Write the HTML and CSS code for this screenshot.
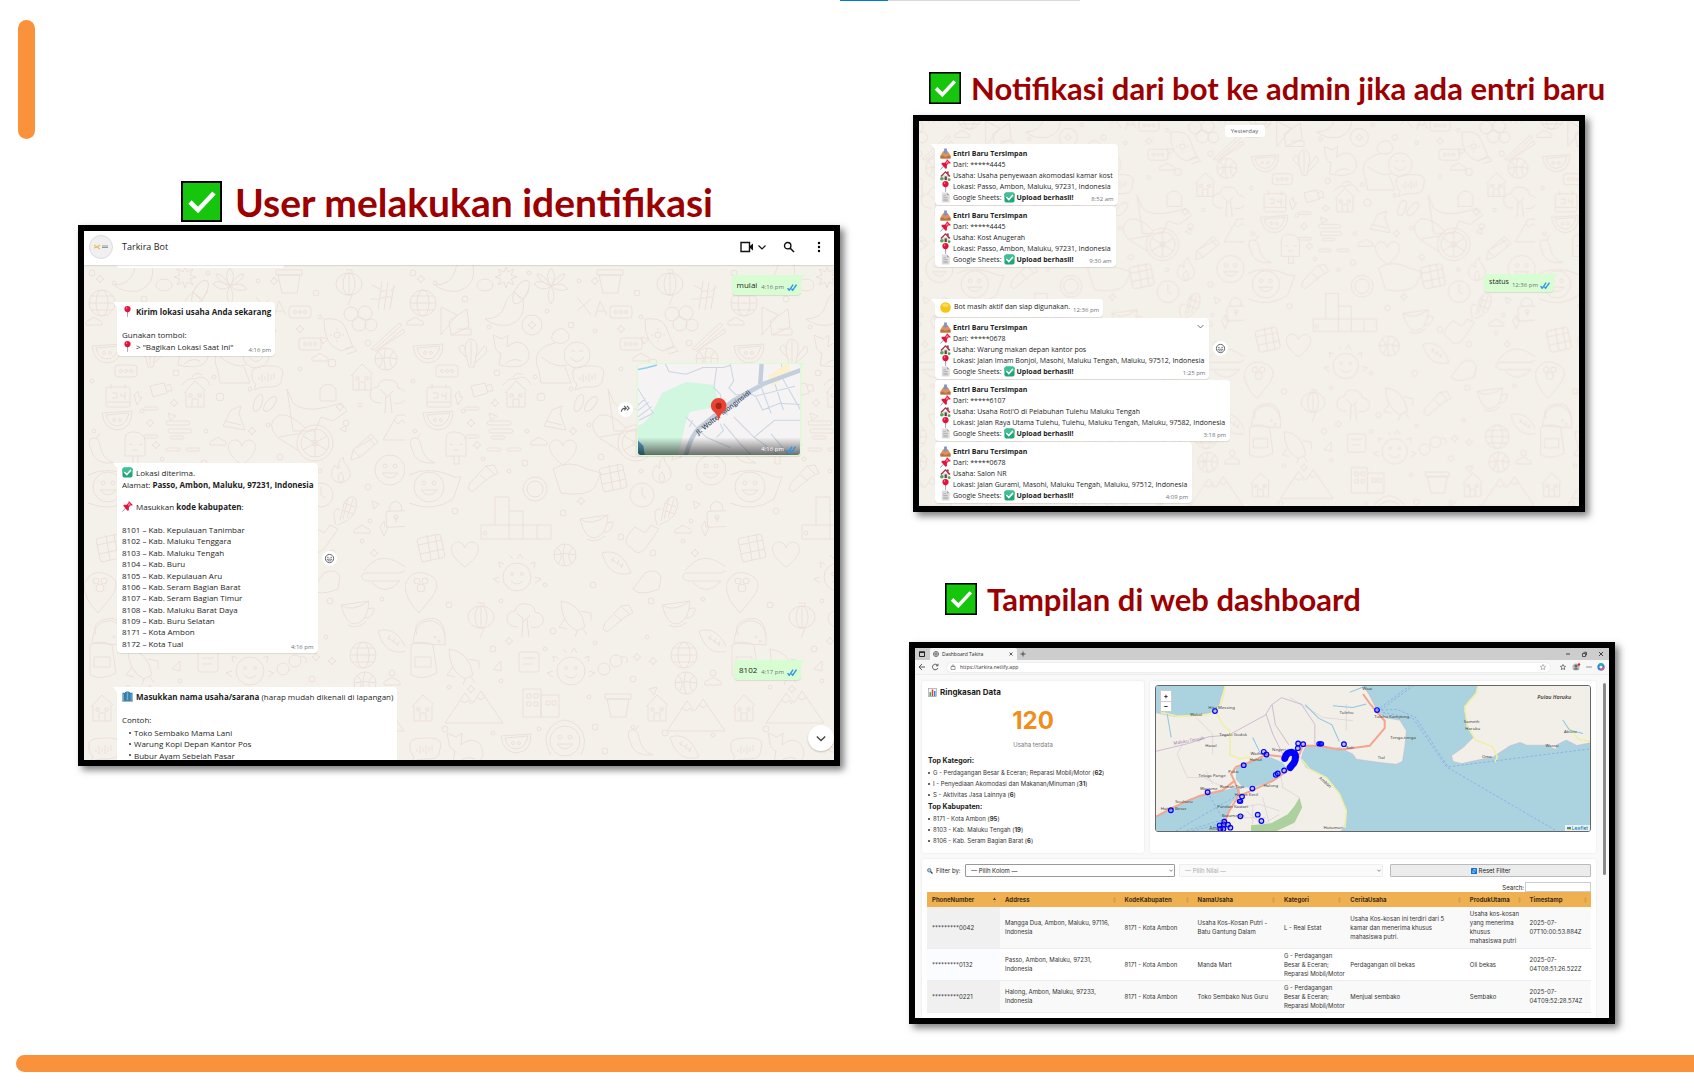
FILE: index.html
```html
<!DOCTYPE html>
<html lang="id">
<head>
<meta charset="utf-8">
<meta name="viewport" content="width=device-width, initial-scale=1">
<title>Tarkira Bot</title>
<link rel="stylesheet" href="styles.css">
</head>
<body>
<svg class="defs" aria-hidden="true">
  <defs>
    <symbol id="tick" viewBox="0 0 41 41"><rect x="1" y="1" width="39" height="39" fill="#16c60c" stroke="#000" stroke-width="2"/><path d="M9 21l8 8L33 12" fill="none" stroke="#fff" stroke-width="4.6"/></symbol>
    <symbol id="e-check" viewBox="0 0 24 24"><rect x="1" y="1" width="22" height="22" rx="4" fill="#21a67a"/><rect x="1" y="1" width="22" height="11" rx="4" fill="#3fbf95"/><path d="M6 12l4.5 4.5L18.500 7.500" fill="none" stroke="#fff" stroke-width="3.400" stroke-linecap="round"/></symbol>
    <symbol id="e-pin" viewBox="0 0 24 24"><path d="M11 10h2.600l-.6 14h-1.400z" fill="#8d93a8"/><circle cx="12" cy="6.800" r="6.800" fill="#e0143c"/><circle cx="10" cy="4.500" r="1.800" fill="#ff7f95"/></symbol>
    <symbol id="e-push" viewBox="0 0 24 24"><path d="M10 13L1 23" stroke="#8d93a8" stroke-width="2"/><path d="M15 0l9 9-4 1-2 0-3 4 0 6-3 1L3 11l1-3 6 0 4-4z" fill="#e0143c"/><path d="M12 8l4-4 3 3-4 4z" fill="#ff6f8a"/></symbol>
    <symbol id="e-tray" viewBox="0 0 24 24"><path d="M6 8h12l5 9v6H1v-6z" fill="#d9935b"/><path d="M1 17h6l2 2h6l2-2h6v6H1z" fill="#b8713f"/><path d="M9 1h6v6h3l-6 6-6-6h3z" fill="#7d92c4"/></symbol>
    <symbol id="e-house" viewBox="0 0 24 24"><path d="M4 11h15v11H4z" fill="#e9e2d6"/><path d="M12 2L1 13l2 2 9-9 8 9 3-2z" fill="#a03347"/><path d="M15 3h4v6l-4-4z" fill="#a03347"/><rect x="10" y="14" width="5" height="8" fill="#5b4a4a"/><circle cx="4" cy="19" r="4" fill="#58a454"/><circle cx="20" cy="21" r="3" fill="#58a454"/></symbol>
    <symbol id="e-page" viewBox="0 0 24 24"><path d="M4 1h11l6 6v16H4z" fill="#dcdcdc"/><path d="M15 1l6 6h-6z" fill="#a9a9a9"/><path d="M7 8h6M7 12h10M7 16h10M7 19h10" stroke="#a2a2a2" stroke-width="1.500"/></symbol>
    <symbol id="e-build" viewBox="0 0 24 24"><path d="M1 4h6v19H1zM9 1h6v22H9zM17 4h6v19h-6z" fill="#2a7fb5"/><path d="M7 2h2v21H7zM15 2h2v21h-2z" fill="#245a80"/><path d="M3 6v14M12 3v17M20 6v14" stroke="#8dc8e8" stroke-width="1.500"/><path d="M0 20h5v3H0zM19 20h5v3h-5z" fill="#b9a16a"/></symbol>
    <symbol id="e-yellow" viewBox="0 0 24 24"><circle cx="12" cy="12" r="11.500" fill="#f5c518"/><ellipse cx="12" cy="7" rx="7" ry="4" fill="#fbdc5a"/></symbol>
    <symbol id="e-chart" viewBox="0 0 24 24"><rect x="1" y="1" width="22" height="22" fill="#f4f4f4" stroke="#8a9297" stroke-width="1.500"/><rect x="4" y="11" width="4" height="11" fill="#3fa66a"/><rect x="10" y="4" width="4" height="18" fill="#d9442f"/><rect x="16" y="8" width="4" height="14" fill="#3587d6"/></symbol>
    <symbol id="e-mag" viewBox="0 0 24 24"><circle cx="9" cy="9" r="7" fill="#9fd3f2" stroke="#5a6a78" stroke-width="3"/><path d="M14 14l8 8" stroke="#33475b" stroke-width="5"/></symbol>
    <symbol id="e-reset" viewBox="0 0 24 24"><rect width="24" height="24" rx="2" fill="#0f75d3"/><path d="M7 10a5.500 5.500 0 0 1 10-1M17 14a5.500 5.500 0 0 1-10 1M17 5v4h-4M7 19v-4h4" fill="none" stroke="#fff" stroke-width="2"/></symbol>
    <symbol id="i-smile" viewBox="0 0 24 24"><circle cx="12" cy="12" r="9" fill="none" stroke="#54595c" stroke-width="2"/><circle cx="8.500" cy="9.500" r="1.500" fill="#54595c"/><circle cx="15.500" cy="9.500" r="1.500" fill="#54595c"/><path d="M7 13.500h10c-.5 5-9.500 5-10 0z" fill="none" stroke="#54595c" stroke-width="1.600"/></symbol>
    <symbol id="i-read" viewBox="0 0 18 12"><path d="M1 7l3 4 7-10M8 8l2 3 7-10" fill="none" stroke="#2f95e6" stroke-width="2.500"/></symbol>
    <symbol id="i-down" viewBox="0 0 12 8"><path d="M1 1.500l5 5 5-5" fill="none" stroke="currentColor" stroke-width="1.600"/></symbol>
    <symbol id="i-sort" viewBox="0 0 6 12"><path d="M3 0l3 5H0zM3 12l3-5H0z" fill="#cf9a4a"/></symbol>
    <symbol id="i-up" viewBox="0 0 6 12"><path d="M3 1l3 5H0z" fill="#4a3a20"/><path d="M3 11l2-3H1z" fill="#cf9a4a"/></symbol>

    <g id="d-globe"><circle r="13"/><ellipse rx="6" ry="13"/><path d="M-13 0H13M-11-7H11M-11 7H11"/></g>
    <g id="d-smile"><circle r="15"/><circle cx="-5" cy="-4" r="2"/><circle cx="5" cy="-4" r="2"/><path d="M-8 3Q0 13 8 3z"/></g>
    <g id="d-flower"><path d="M0 0Q-7-10 0-18Q7-10 0 0Q12-5 17 3Q8 7 0 0Q6 12 0 18Q-6 10 0 0Q-12-8-17-2Q-9 7 0 0Q8-13 14-12Q12-4 0 0Q-8-13-14-12Q-12-4 0 0"/></g>
    <g id="d-star"><path d="M0-9l2 5 6-3-3 6 6 2-6 2 3 6-6-3-2 6-2-6-6 3 3-6-6-2 6-2-3-6 6 3z"/></g>
    <g id="d-spark"><path d="M0-4Q1-1 4 0Q1 1 0 4Q-1 1-4 0Q-1-1 0-4z"/></g>
    <g id="d-heart"><path d="M0 12C-20-2-14-14-6-13Q-1-12 0-7Q2-13 7-13C16-12 17 0 0 12z"/></g>
    <g id="d-house"><path d="M-11-2L0-14 11-4M-9-3v15H9V-4M-3 12V4h6v8M-6-1h3v3h-3zM3-1h3v3H3z"/></g>
    <g id="d-box"><rect x="-11" y="-6" width="22" height="12" rx="3"/><circle cx="-5" r="1.500"/><circle r="1.500"/><circle cx="5" r="1.500"/></g>
    <g id="d-cal"><rect x="-12" y="-9" width="24" height="20" rx="2"/><path d="M-12 6H12M-7-12v5M7-12v5M-6-3h5v5h-5M3-3v3h4M7-4v8"/></g>
    <g id="d-fire"><path d="M0 12C-14 10-9-2-6-6Q-4-2-2-3Q-4-9 2-14Q2-8 7-4Q14 8 0 12zM0 12Q-6 6 0 1Q5 7 0 12"/></g>
    <g id="d-pencil"><path d="M-14 12l2-10L6-14l7 8L-5 9zM-12 2l7 7M3-11l7 8M-9 0L8-10"/></g>
    <g id="d-tree"><path d="M-7 6Q-18 6-18-3Q-17-10-10-10Q-8-19 2-17Q10-16 10-9Q20-7 18 1Q15 8 6 6M-3 16L-2-2l-6-6M-2 1l7-7M4 16L2-2"/></g>
    <g id="d-melon"><path d="M-16-7L14-9Q14 9-1 10Q-14 9-16-7M-12-5l23-2Q8 6-1 6Q-10 5-12-5"/><circle cx="-4" r="1.500"/><circle cx="2" r="1.500"/></g>
    <g id="d-ice"><path d="M-10 10V-8Q-9-15 0-14Q10-13 10-4V10zM-2 10v8h5v-8M-6-2l3 1M4-1l3-1M-3 4h6"/></g>
    <g id="d-wheel"><circle r="18"/><circle r="14"/><circle r="3"/><path d="M0-14V14M-12-7L12 7M-12 7L12-7M-10-15Q-24-30-36-28Q-50-20-38-6L-16 8M-36-6l24-4"/></g>
    <g id="d-berry"><circle cx="-8" cy="-6" r="7"/><circle cx="6" cy="-7" r="7"/><circle cy="4" r="7"/><circle cx="12" cy="5" r="6"/></g>
    <g id="d-ball"><circle r="11"/><path d="M-11 0Q0-3 11 0M0-11Q-4 0 0 11M-8-8Q0 0-7 9M8-8Q0 0 7 9"/></g>
    <g id="d-fox"><path d="M-18-16l2 10Q-16 0-10 2L-12 14Q14 20 18 6Q18-8 6-9Q0-8-4-4L-3-16l-6 4zM-6 13Q2 6 10 10"/></g>
    <g id="d-hug"><path d="M-4-24Q6-34 12-22Q12-12 0-14Q-8-16-4-24M-2-14Q-28-8-18 14L-16 26H14L8 10M-16 0Q0 12 10 8"/><circle cx="20" cy="-2" r="13"/><path d="M13 0Q20 9 27 0M14-6l4 0M22-6l4 0"/></g>
    <g id="d-chat"><path d="M-15-6Q-14-11 0-11Q15-12 16-5L14 5Q12 11-2 10Q-7 10-13 13L-11 7Q-16 5-15-6M-8 0v3M-5-3v8M-2-1v4M1-4v9M4-2v5M7-4v6"/></g>
    <g id="d-cactus"><path d="M-4 14L-8-2Q-8-14-2-14Q5-13 4-2L1 14zM-7 4L-14-3Q-14-8-10-8L-7-3M3 4L11-7Q15-6 13 0L2 10M-2-12V12"/></g>
    <g id="d-kite"><path d="M-13-16Q4-18 8-8L16 12 4 16Q-14 10-13-16zM8 14l8-3 4 5-10 3"/><circle r="3"/><path d="M0-7v2M0 7V5M-7 0h2M7 0H5"/></g>
    <g id="d-cards"><path d="M-14-16L2-8-14 12zM-6-2L12-14 14 4-4 12zM-4 12h20v-6H2"/></g>
    <g id="d-cup"><path d="M-15-8L13-12Q12 8 0 11Q-10 12-15-8M12-4Q22-8 16 2Q13 6 8 5M-15-8Q-4 0 13-12M-8 12Q0 17 10 9"/></g>
    <g id="d-lock"><rect x="-10" y="-4" width="20" height="16" rx="3"/><path d="M-6-4v-5Q0-18 6-9v5M0 2v5"/><circle cy="2" r="2"/></g>
    <g id="d-corn"><path d="M-10 14Q-16-4-6-2M-8 14Q14 6 10-12Q4-18-2-8L-6 10M-2-8L9-4M-4-1L8 3M2-13L-3 8M7-12L1 7"/></g>
    <g id="d-grid"><rect x="-12" y="-12" width="24" height="24" rx="3" transform="rotate(-12)"/><path d="M-4-13L0 12M4-14L8 10M-13-3L11-8M-11 6L13 1"/></g>
    <g id="d-taco"><path d="M-16 10Q-14-14 4-12Q18-8 16 12zM-12 2Q-18-10-2-14Q14-18 16 2"/><circle cx="6" cy="4" r="1"/><circle cx="10" cy="8" r="1"/></g>
    <g id="d-foot"><path d="M-15-10Q4-16 14 10Q-8 16-15-10M-6-4l12 8M-3-6l-2 5M2-3l-2 5M6 0l-2 5"/></g>
    <g id="d-rocket"><path d="M-14-16Q6-14 10 10L2 14Q-14 6-14-16M-10 2l-6 8 8 2M6-6l10 2 0 8M2 14l-2 6M8 12l4 6"/></g>
    <g id="d-sun"><circle r="14"/><path d="M0-18l3-5 3 5M13-13l5-2-1 6M18 0l6 2-6 4M-13-13l-5-2 1 6M-18 0l-6 2 6 4M-4-18l-4-4M-6 4Q0 10 6 4"/><circle cx="-5" cy="-3" r="1.500"/><circle cx="5" cy="-3" r="1.500"/></g>
    <g id="d-mount"><path d="M-30 18L-10-12-2-2 6-14 28 18zM-15-5l5 3 3-3 3 4M2-8l4 3 4-3"/></g>
    <g id="d-lamp"><ellipse rx="13" ry="11"/><ellipse rx="6" ry="11"/><path d="M0-11V11M-3-14h6v3M-3 11h6l-4 10"/></g>
    <g id="d-bamboo"><path d="M-6 14L-2-14M0 15L4-13M6 14l4-24M-5 3h6M1 2h6M-12-10l8 4M12-8l-6 4M-14 4l8 0M-3-4h6"/></g>
    <g id="d-whale"><path d="M-20 10Q-4 10 0-4Q2-14 10-16L18-10Q22 10 4 16Q-10 18-20 10M18-10l6-8M16-10l-8-8"/></g>
    <g id="d-sticks"><path d="M-16 14L12-12l3 2-28 25zM-12 17L16-6l2 3-28 18z"/></g>
    <g id="d-pot"><path d="M-12-6h22l-3 18H-8zM-14-11h26v5h-26z"/></g>
    <g id="d-pepper"><path d="M-10-12Q-2-16 0-6Q2 8 14 12Q-6 14-9-2Q-12-6-10-12M-4-12l4-6"/></g>
    <g id="d-bottle"><path d="M-14 12l4 3L8 0l8-4-4-8-8 1-16 17zM-2-2l7 6M4-11l8 8"/></g>

    <pattern id="doodles" width="321" height="500" patternUnits="userSpaceOnUse">
      <g fill="none" stroke="#ecdfd9" stroke-width="1">
        <use href="#d-whale" x="50" y="10"/><use href="#d-star" x="101" y="11"/><use href="#d-flower" x="146" y="21"/><use href="#d-pot" x="206" y="16"/><use href="#d-lamp" x="265" y="19"/><use href="#d-bamboo" x="300" y="30"/><use href="#d-globe" x="18" y="38"/><ellipse cx="80" cy="20" rx="8" ry="6"/><ellipse cx="116" cy="27" rx="6" ry="13" transform="rotate(30 116 27)"/>
        <use href="#d-box" x="216" y="47"/><use href="#d-kite" x="253" y="70"/><use href="#d-cards" x="50" y="58"/><circle cx="127" cy="60" r="10"/><use href="#d-spark" x="127" y="60"/><path d="M172 32l14 18M186 34l-14 12M190 52l5-16 7 14M192 46h7"/><use href="#d-whale" x="100" y="44"/><use href="#d-fox" x="106" y="86"/><use href="#d-cactus" x="68" y="88"/><use href="#d-hug" x="152" y="92"/><use href="#d-berry" x="275" y="55"/><use href="#d-sticks" x="303" y="70"/><use href="#d-box" x="226" y="79"/><use href="#d-melon" x="24" y="88"/><use href="#d-ball" x="302" y="94"/><use href="#d-box" x="42" y="106"/><use href="#d-chat" x="183" y="112"/><use href="#d-house" x="278" y="113"/>
        <use href="#d-cal" x="34" y="131"/><path d="M66 121l14-3 3 10-14 4zM81 121l5-2 2 7-5 0"/><use href="#d-house" x="111" y="130"/><path d="M98 120q6-8 13-6q10-6 15 6M108 112q4-6 10-2"/><use href="#d-tree" x="304" y="132"/><use href="#d-melon" x="34" y="155"/><path d="M299 175l14-25h8l8 25zM310 155l4 4 4-4 4 4"/><path d="M147 145l10-4-2 8 6 16-22-4zM141 156l16 4"/><ellipse cx="174" cy="138" rx="4" ry="9" transform="rotate(20 174 138)"/><ellipse cx="186" cy="139" rx="4" ry="9" transform="rotate(40 186 139)"/><path d="M203 124l6 14q10 10 34 4l14-4 6 8-14 10-12-4-6 14-22 0zM236 124q8-10 16 0v12h-16z"/><use href="#d-wheel" x="231" y="178"/><use href="#d-pencil" x="281" y="183"/><use href="#d-ice" x="51" y="181"/><use href="#d-pepper" x="16" y="186"/><use href="#d-heart" x="158" y="188"/>
        <g><rect x="60" y="142" width="14" height="3" rx="1.500"/><rect x="82" y="156" width="24" height="4" rx="2"/><rect x="84" y="164" width="24" height="4" rx="2"/><rect x="60" y="170" width="14" height="3" rx="1.500"/><rect x="86" y="171" width="14" height="3" rx="1.500"/><rect x="82" y="183" width="14" height="3" rx="1.500"/><rect x="102" y="183" width="14" height="3" rx="1.500"/></g><path d="M148 204q16-10 34 0l14 4-6 14q-8 10-34 6z"/><use href="#d-grid" x="208" y="213"/><use href="#d-fire" x="257" y="206"/><use href="#d-smile" x="306" y="205"/><use href="#d-smile" x="24" y="222"/><path d="M4 210q20-10 46 2l6 0-8 22q-20 14-44 4"/><use href="#d-bottle" x="77" y="212"/><circle cx="130" cy="224" r="12"/><circle cx="130" cy="224" r="8"/><circle cx="237" cy="230" r="12"/><path d="M237 222v8l4 3"/><use href="#d-corn" x="262" y="246"/><use href="#d-lock" x="312" y="250" transform="rotate(-3 312 250)"/><use href="#d-grid" x="26" y="283"/><path d="M90 232h14v14h14v14h28v14H76v-14h14zM104 246v28M118 260v14M132 260v14M90 260h28"/><path d="M230 262q-16 16-4 20q6 10 14 2l14-20-8-4-6 8z"/><use href="#d-cup" x="190" y="262"/><use href="#d-ball" x="160" y="290"/><use href="#d-foot" x="212" y="298"/><use href="#d-heart" x="60" y="290"/><use href="#d-sun" x="112" y="312"/>
        <path d="M280 306q16-22 38-6q10 4-2 8l-36 0q-6 4 2 8h34M288 318q14 14 28-2"/><path d="M240 308q12-6 16 4l-2 12q-20 8-26 0z"/><use href="#d-cup" x="272" y="348"/><path d="M0 320q8-20 28-8q10 8-4 24l-10 12q-14-14-14-28z"/><circle cx="12" cy="316" r="3"/><circle cx="20" cy="316" r="3"/><circle cx="16" cy="323" r="4"/><use href="#d-taco" x="24" y="368"/><use href="#d-foot" x="309" y="376"/><use href="#d-globe" x="279" y="390"/><use href="#d-rocket" x="58" y="400"/><path d="M6 380q10-6 22 0l4 28q-14 8-26 2zM10 392h16v10H10z"/><rect x="114" y="387" width="20" height="20" rx="2"/><path d="M118 393h12M118 399h10"/><use href="#d-sun" x="166" y="406"/><circle cx="199" cy="404" r="6"/><circle cx="211" cy="396" r="6"/><path d="M216 392q8-2 6 6"/><use href="#d-ball" x="281" y="418"/><use href="#d-house" x="18" y="444"/><use href="#d-mount" x="70" y="440"/><use href="#d-pot" x="214" y="440"/><path d="M118 424h18v28h-18zM136 430h18v22h-18zM122 429h4v4h-4zM129 429h4v4h-4zM122 437h4v4h-4zM129 437h4v4h-4zM141 436h4v4h-4zM147 436h4v4h-4z"/><use href="#d-house" x="252" y="444"/><use href="#d-mount" x="292" y="448"/><use href="#d-smile" x="160" y="476"/><path d="M146 462q14-14 28 0q10 12 2 28M146 462q-10 12 0 28"/><use href="#d-melon" x="112" y="478"/><use href="#d-fox" x="60" y="484"/><use href="#d-pepper" x="234" y="478"/><use href="#d-foot" x="280" y="482"/><use href="#d-chat" x="20" y="484"/><use href="#d-rocket" x="170" y="352"/><use href="#d-tree" x="120" y="356"/><use href="#d-bottle" x="212" y="352"/><use href="#d-lamp" x="76" y="352"/>
        <g><circle cx="8" cy="8" r="3"/><circle cx="30" cy="18" r="2"/><circle cx="124" cy="8" r="2"/><circle cx="174" cy="16" r="2"/><circle cx="232" cy="28" r="3"/><circle cx="60" cy="34" r="3"/><circle cx="142" cy="46" r="2"/><circle cx="166" cy="60" r="3"/><circle cx="84" cy="62" r="2"/><circle cx="190" cy="66" r="2"/><circle cx="236" cy="52" r="2"/><circle cx="284" cy="78" r="3"/><circle cx="92" cy="108" r="3"/><circle cx="130" cy="112" r="2"/><circle cx="8" cy="116" r="2"/><circle cx="248" cy="98" r="4"/><circle cx="216" cy="104" r="2"/><circle cx="58" cy="146" r="2"/><circle cx="136" cy="132" r="4"/><circle cx="166" cy="124" r="2"/><circle cx="276" cy="140" r="2"/><circle cx="262" cy="158" r="3"/><circle cx="10" cy="166" r="2"/><circle cx="122" cy="166" r="2"/><circle cx="184" cy="160" r="2"/><circle cx="78" cy="194" r="2"/><circle cx="120" cy="198" r="3"/><circle cx="196" cy="192" r="3"/><circle cx="236" cy="206" r="2"/><circle cx="284" cy="222" r="3"/><circle cx="104" cy="206" r="2"/><circle cx="50" cy="246" r="3"/><circle cx="158" cy="248" r="3"/><circle cx="286" cy="256" r="2"/><circle cx="216" cy="272" r="3"/><circle cx="248" cy="288" r="3"/><circle cx="278" cy="276" r="2"/><circle cx="80" cy="268" r="2"/><circle cx="140" cy="320" r="2"/><circle cx="188" cy="320" r="3"/><circle cx="246" cy="336" r="3"/><circle cx="298" cy="334" r="2"/><circle cx="44" cy="340" r="3"/><circle cx="96" cy="336" r="2"/><circle cx="148" cy="366" r="3"/><circle cx="242" cy="372" r="2"/><circle cx="190" cy="378" r="2"/><circle cx="88" cy="384" r="3"/><circle cx="140" cy="384" r="2"/><circle cx="228" cy="414" r="3"/><circle cx="308" cy="408" r="3"/><circle cx="96" cy="416" r="2"/><circle cx="184" cy="432" r="2"/><circle cx="44" cy="422" r="2"/><circle cx="190" cy="462" r="3"/><circle cx="228" cy="462" r="2"/><circle cx="134" cy="464" r="2"/><circle cx="260" cy="468" r="3"/><circle cx="88" cy="468" r="2"/><circle cx="40" cy="464" r="3"/><circle cx="200" cy="486" r="3"/><circle cx="308" cy="470" r="2"/></g>
        <use href="#d-spark" x="190" y="16"/><use href="#d-spark" x="16" y="14"/><use href="#d-spark" x="216" y="64"/><use href="#d-spark" x="90" y="138"/><use href="#d-spark" x="168" y="166"/><use href="#d-spark" x="66" y="158"/><use href="#d-spark" x="72" y="180"/><use href="#d-spark" x="256" y="142"/><use href="#d-spark" x="176" y="236"/><use href="#d-spark" x="290" y="288"/><use href="#d-spark" x="232" y="392"/><use href="#d-spark" x="248" y="396"/><use href="#d-spark" x="104" y="376"/><use href="#d-spark" x="66" y="424"/>
        <path d="M236 72l8 2-5 5zM84 148l8 3-6 4zM262 160l-6 4 6 3zM288 236l7 3-5 5zM88 404l8-8 0 10zM244 424l8-2-3 8zM50 130l4-4 1 6 3 0-5 8zM296 262l4-6 1 6 3 0-4 9z"/>
        <path d="M2 60q-1-5 4-5q4-5 8 0q5 0 4 5zM228 96q-1-5 4-5q4-5 8 0q5 0 4 5zM270 268q-1-5 4-5q4-5 8 0q5 0 4 5zM300 420q-1-5 4-5q4-5 8 0q5 0 4 5zM126 180q-1-5 4-5q4-5 8 0q5 0 4 5z"/>
      </g>
    </pattern>
    <pattern id="doodles-small" href="#doodles" patternTransform="translate(34 -38) scale(.907)"/>
    <linearGradient id="shade" x2="0" y2="1"><stop offset="0" stop-color="#000" stop-opacity="0"/><stop offset="1" stop-color="#000" stop-opacity=".55"/></linearGradient>
  </defs>
</svg>

<div class="loader"><span></span></div>

<div class="slide">
  <div class="rail"><div class="rail-bar"></div></div>
  <main class="columns">

    <section class="col-left">
      <h1 class="title title-lg"><svg><use href="#tick"/></svg>User melakukan identifikasi</h1>
      <div class="frame frame-chat">
        <header class="chat-head">
          <svg class="avatar" viewBox="0 0 24 24"><circle cx="12" cy="12" r="11.500" fill="#f0f0f0" stroke="#dcdcdc"/><path d="M5 10l3 2 3-2M5 13l3-1 3 2" stroke="#e9bd62" fill="none" stroke-width="1.200"/><path d="M13 11h6M13 12.500h6" stroke="#999"/></svg>
          <span class="chat-name">Tarkira Bot</span>
          <button class="icon-btn" aria-label="Video"><svg width="26" height="12" viewBox="0 0 26 12"><path d="M1 1.500h8.500v9H1z" fill="none" stroke="#111" stroke-width="1.400"/><path d="M10 5l3-2.500v7L10 7z" fill="#111"/><path d="M18.500 4.500L22 8l3.500-3.500" fill="none" stroke="#111" stroke-width="1.200"/></svg></button>
          <button class="icon-btn" aria-label="Cari"><svg width="12" height="12" viewBox="0 0 12 12"><circle cx="4.700" cy="4.700" r="3.200" fill="none" stroke="#111" stroke-width="1.400"/><path d="M7 7l4 4" stroke="#111" stroke-width="1.600"/></svg></button>
          <button class="icon-btn" aria-label="Menu"><svg width="4" height="12" viewBox="0 0 4 12"><circle cx="2" cy="2" r="1.200"/><circle cx="2" cy="6" r="1.200"/><circle cx="2" cy="10" r="1.200"/></svg></button>
        </header>
        <div class="chat">
          <svg class="wall"><rect width="100%" height="100%" fill="url(#doodles)"/></svg>
          <div class="stub"></div>
          <div class="row out"><div class="bubble short tail-r">mulai <time>4:16 pm</time><svg class="read"><use href="#i-read"/></svg></div></div>
          <div class="row"><div class="bubble tail-l"><div class="lines four">
            <div class="ln"><svg class="em"><use href="#e-pin"/></svg><b>Kirim lokasi usaha Anda sekarang</b></div><div></div>
            <div>Gunakan tombol:</div>
            <div class="ln"><svg class="em"><use href="#e-pin"/></svg><span>&gt; "Bagikan Lokasi Saat Ini"</span></div></div>
            <time>4:16 pm</time></div></div>
          <div class="row out"><button class="round" aria-label="Teruskan"><svg viewBox="0 0 24 24"><path d="M3 17q1-8 9-8M9 4l5 5-5 5M15 4l5 5-5 5" fill="none" stroke="#54595c" stroke-width="2.200"/></svg></button>
            <div class="bubble map-bubble tail-r">
              <svg class="loc-map" viewBox="595 435 484 267" preserveAspectRatio="xMidYMid slice">
                <path d="M595 435h484v267H595z" fill="#f5f3f4"/>
                <path d="M595 618q30-10 45-40l30-58 70-32 80 8 12 32 0 32-80 16-10 20-24 106-100 0-23-50z" fill="#d1f7e1"/>
                <path d="M595 655l20 20 4 27h-24z" fill="#5aa5c4"/><path d="M595 452l30-6 30-8" stroke="#8ed0ea" stroke-width="5" fill="none"/>
                <g fill="none" stroke="#cbd6e2" stroke-width="3"><path d="M595 500l30 50 20 30M600 590l40-30M595 575l36-28M602 600l40-20M595 560l26-24M680 435l10 22 50 8 50-20 60 0 20-6M830 445l-8 60 20 20 0 30 20 30M870 435l10 50-14 20 20 20 50 0M885 560l40-40 20 10 20 40 50-20 60 4M960 500l30 80M1000 490l26 80M940 530l120-30M1025 480l54 95M1020 435l6 40M850 610l50 60 30 30M880 590l60 60 60-50 79 0M940 650l70 50M740 590l60 60 70 30M990 640l50 60M760 600l-10 20M830 650l20-20-10-20"/></g>
                <path d="M980 470l60-40 8 30-54 40z" fill="#fdf0cf"/>
                <path d="M740 702q16-60 40-80l100-80 90-50 109-40M962 435l-4 60" fill="none" stroke="#c3cfdd" stroke-width="13"/>
                <text x="776" y="643" transform="rotate(-38 776 643)" class="street">Jl. Wolter Monginsidi</text>
                <path d="M836 602q-4-20-16-28a23 23 0 1 1 32 0q-12 8-16 28z" fill="#ea4335"/><circle cx="836" cy="558" r="9" fill="#a52714"/>
                <path d="M595 650h484v52H595z" fill="url(#shade)"/>
              </svg>
              <div class="map-meta"><time>4:16 pm</time><svg class="read"><use href="#i-read"/></svg></div>
            </div></div>
          <div class="row"><div class="bubble tail-l"><div class="lines sixteen">
            <div class="ln"><svg class="em"><use href="#e-check"/></svg><span>Lokasi diterima.</span></div>
            <div>Alamat: <b>Passo, Ambon, Maluku, 97231, Indonesia</b></div><div></div>
            <div class="ln"><svg class="em"><use href="#e-push"/></svg><span>Masukkan <b>kode kabupaten</b>:</span></div><div></div>
            <div>8101 – Kab. Kepulauan Tanimbar</div><div>8102 – Kab. Maluku Tenggara</div><div>8103 – Kab. Maluku Tengah</div><div>8104 – Kab. Buru</div><div>8105 – Kab. Kepulauan Aru</div><div>8106 – Kab. Seram Bagian Barat</div><div>8107 – Kab. Seram Bagian Timur</div><div>8108 – Kab. Maluku Barat Daya</div><div>8109 – Kab. Buru Selatan</div><div>8171 – Kota Ambon</div><div>8172 – Kota Tual</div></div>
            <time>4:16 pm</time></div>
            <button class="round" aria-label="Reaksi"><svg><use href="#i-smile"/></svg></button></div>
          <div class="row out"><div class="bubble short tail-r">8102 <time>4:17 pm</time><svg class="read"><use href="#i-read"/></svg></div></div>
          <div class="row"><div class="bubble tail-l"><div class="lines three">
            <div class="ln"><svg class="em"><use href="#e-build"/></svg><span><b>Masukkan nama usaha/sarana</b> (harap mudah dikenali di lapangan)</span></div><div></div>
            <div>Contoh:</div></div>
            <ul class="lines three"><li>Toko Sembako Mama Lani</li><li>Warung Kopi Depan Kantor Pos</li><li>Bubur Ayam Sebelah Pasar</li></ul></div></div>
          <button class="to-end" aria-label="Ke bawah"><svg><use href="#i-down"/></svg></button>
        </div>
      </div>
    </section>

    <div class="col-right">
      <section>
        <h2 class="title title-admin"><svg><use href="#tick"/></svg>Notifikasi dari bot ke admin jika ada entri baru</h2>
        <div class="frame frame-admin">
          <div class="chat chat-sm">
            <svg class="wall"><rect width="100%" height="100%" fill="url(#doodles-small)"/></svg>
            <div class="day">Yesterday</div>
            <div class="row"><div class="bubble tail-l entry"><div class="lines five">
              <div class="ln"><svg class="em"><use href="#e-tray"/></svg><b>Entri Baru Tersimpan</b></div>
              <div class="ln"><svg class="em"><use href="#e-push"/></svg>Dari: *****4445</div>
              <div class="ln"><svg class="em"><use href="#e-house"/></svg>Usaha: Usaha penyewaan akomodasi kamar kost</div>
              <div class="ln"><svg class="em"><use href="#e-pin"/></svg>Lokasi: Passo, Ambon, Maluku, 97231, Indonesia</div>
              <div class="ln"><svg class="em"><use href="#e-page"/></svg>Google Sheets: <svg class="em"><use href="#e-check"/></svg><b>Upload berhasil!</b></div></div><time>8:52 am</time></div></div>
            <div class="row next"><div class="bubble entry"><div class="lines five">
              <div class="ln"><svg class="em"><use href="#e-tray"/></svg><b>Entri Baru Tersimpan</b></div>
              <div class="ln"><svg class="em"><use href="#e-push"/></svg>Dari: *****4445</div>
              <div class="ln"><svg class="em"><use href="#e-house"/></svg>Usaha: Kost Anugerah</div>
              <div class="ln"><svg class="em"><use href="#e-pin"/></svg>Lokasi: Passo, Ambon, Maluku, 97231, Indonesia</div>
              <div class="ln"><svg class="em"><use href="#e-page"/></svg>Google Sheets: <svg class="em"><use href="#e-check"/></svg><b>Upload berhasil!</b></div></div><time>9:30 am</time></div></div>
            <div class="row out"><div class="bubble short tail-r">status <time>12:36 pm</time><svg class="read"><use href="#i-read"/></svg></div></div>
            <div class="row"><div class="bubble short tail-l"><svg class="em"><use href="#e-yellow"/></svg>Bot masih aktif dan siap digunakan. <time>12:36 pm</time></div></div>
            <div class="row next"><div class="bubble entry"><svg class="more"><use href="#i-down"/></svg><div class="lines five">
              <div class="ln"><svg class="em"><use href="#e-tray"/></svg><b>Entri Baru Tersimpan</b></div>
              <div class="ln"><svg class="em"><use href="#e-push"/></svg>Dari: *****0678</div>
              <div class="ln"><svg class="em"><use href="#e-house"/></svg>Usaha: Warung makan depan kantor pos</div>
              <div class="ln"><svg class="em"><use href="#e-pin"/></svg>Lokasi: Jalan Imam Bonjol, Masohi, Maluku Tengah, Maluku, 97512, Indonesia</div>
              <div class="ln"><svg class="em"><use href="#e-page"/></svg>Google Sheets: <svg class="em"><use href="#e-check"/></svg><b>Upload berhasil!</b></div></div><time>1:25 pm</time></div>
              <button class="round" aria-label="Reaksi"><svg><use href="#i-smile"/></svg></button></div>
            <div class="row next"><div class="bubble entry"><div class="lines five">
              <div class="ln"><svg class="em"><use href="#e-tray"/></svg><b>Entri Baru Tersimpan</b></div>
              <div class="ln"><svg class="em"><use href="#e-push"/></svg>Dari: *****6107</div>
              <div class="ln"><svg class="em"><use href="#e-house"/></svg>Usaha: Usaha Roti'O di Pelabuhan Tulehu Maluku Tengah</div>
              <div class="ln"><svg class="em"><use href="#e-pin"/></svg>Lokasi: Jalan Raya Utama Tulehu, Tulehu, Maluku Tengah, Maluku, 97582, Indonesia</div>
              <div class="ln"><svg class="em"><use href="#e-page"/></svg>Google Sheets: <svg class="em"><use href="#e-check"/></svg><b>Upload berhasil!</b></div></div><time>3:18 pm</time></div></div>
            <div class="row next"><div class="bubble entry"><div class="lines five">
              <div class="ln"><svg class="em"><use href="#e-tray"/></svg><b>Entri Baru Tersimpan</b></div>
              <div class="ln"><svg class="em"><use href="#e-push"/></svg>Dari: *****0678</div>
              <div class="ln"><svg class="em"><use href="#e-house"/></svg>Usaha: Salon NR</div>
              <div class="ln"><svg class="em"><use href="#e-pin"/></svg>Lokasi: Jalan Gurami, Masohi, Maluku Tengah, Maluku, 97512, Indonesia</div>
              <div class="ln"><svg class="em"><use href="#e-page"/></svg>Google Sheets: <svg class="em"><use href="#e-check"/></svg><b>Upload berhasil!</b></div></div><time>4:09 pm</time></div></div>
          </div>
        </div>
      </section>

      <section>
        <h2 class="title title-dash"><svg><use href="#tick"/></svg>Tampilan di web dashboard</h2>
        <div class="frame frame-dash">
          <div class="tabs">
            <svg class="tab-menu" viewBox="0 0 6 6"><path d="M.5 1h5v4.500h-5z" fill="none" stroke="#222"/><path d="M0 .5h6v1.500H0z" fill="#222"/></svg>
            <div class="tab"><svg viewBox="0 0 6 6"><circle cx="3" cy="3" r="2.500" fill="none" stroke="#444" stroke-width=".7"/><path d="M.5 3h5M3 .5v5" stroke="#444" stroke-width=".7"/></svg><span>Dashboard Takira</span><svg viewBox="0 0 6 6"><path d="M1.500 1.500l3 3M4.500 1.500l-3 3" stroke="#333" stroke-width=".8"/></svg></div>
            <svg class="plus" viewBox="0 0 6 6"><path d="M3 .5v5M.5 3h5" stroke="#333" stroke-width=".8"/></svg>
            <svg class="win" viewBox="0 0 40 6"><path d="M1 3h4M34 1l4 4M38 1l-4 4" stroke="#333" stroke-width=".9"/><path d="M17.500 2.500h3v3h-3zM18.500 1.300h3v3" fill="none" stroke="#333" stroke-width=".8"/></svg>
          </div>
          <div class="toolbar">
            <svg class="nav" viewBox="0 0 24 8"><path d="M7 4H1.500M4 1L1 4l3 3" fill="none" stroke="#333" stroke-width=".8"/><path d="M19.500 2.300a2.800 2.800 0 1 0 .4 2.700M20 .8v2h-2" fill="none" stroke="#333" stroke-width=".8"/></svg>
            <label class="address"><svg viewBox="0 0 6 6"><path d="M1 2.500h4v3H1zM2 2.500v-1q1-1.500 2 0v1" fill="none" stroke="#777" stroke-width=".7"/></svg><input type="text" value="https://tarkira.netlify.app" aria-label="Alamat"><svg viewBox="0 0 6 6"><path d="M3 .5l.8 1.700 1.800.2-1.300 1.200.4 1.900L3 4.600l-1.700.9.4-1.900L.4 2.400l1.800-.2z" fill="none" stroke="#777" stroke-width=".5"/></svg></label>
            <svg class="tools" viewBox="0 0 50 8"><path d="M8 1.500l.8 1.700 1.800.2-1.300 1.200.4 1.900L8 5.600l-1.700.9.4-1.900-1.300-1.200 1.800-.2z" fill="none" stroke="#333" stroke-width=".6"/><circle cx="21" cy="4" r="3.600" fill="#bbb"/><circle cx="21" cy="3" r="1.500" fill="#666"/><path d="M18 6.500q3-3 6 0" fill="#666"/><circle cx="24" cy="1.500" r="1.200" fill="#d22"/><path d="M31.500 4h5" stroke="#333" stroke-dasharray="1 1"/><circle cx="46" cy="4" r="2.600" fill="none" stroke="#2a7de1" stroke-width="2"/><path d="M44 2a2.600 2.600 0 0 1 4 0" stroke="#1fb6a6" stroke-width="2" fill="none"/><path d="M48.600 4a2.600 2.600 0 0 1-3 2.500" stroke="#e8518d" stroke-width="2" fill="none"/></svg>
          </div>
          <div class="viewport">
            <div class="page">
              <div class="top-cards">
                <section class="card summary">
                  <h3><svg><use href="#e-chart"/></svg>Ringkasan Data</h3>
                  <p class="total">120</p>
                  <p class="total-label">Usaha terdata</p>
                  <h4>Top Kategori:</h4>
                  <ul><li>G - Perdagangan Besar &amp; Eceran; Reparasi Mobil/Motor (<b>62</b>)</li><li>I - Penyediaan Akomodasi dan Makanan/Minuman (<b>31</b>)</li><li>S - Aktivitas Jasa Lainnya (<b>6</b>)</li></ul>
                  <h4>Top Kabupaten:</h4>
                  <ul><li>8171 - Kota Ambon (<b>95</b>)</li><li>8103 - Kab. Maluku Tengah (<b>19</b>)</li><li>8106 - Kab. Seram Bagian Barat (<b>6</b>)</li></ul>
                </section>
                <section class="card map-card">
                  <div class="map">
                    <svg viewBox="48 166 1304 434" preserveAspectRatio="xMidYMid slice">
                      <path d="M45 163h1310v440H45z" fill="#aad3df"/>
                      <g fill="#f2efe9" stroke="#c9b3c4" stroke-width="1.500">
                        <path d="M258 160h410l22 35 10 20 15 30 25 17 40 6 20 32-5 50-7 42-18 8-50-5-70-10-10-15-40-20-30 5-15-10h-55l-10 20-5 20 15 25 60 30 40 50 22 50-7 50-15 13H232l18-30 15-30 10-25 25-30 0-20-70 17-80 20-105 55V245l65 13 50-3 55-10 23-15 5-25z"/>
                        <path d="M1015 160l-5 25-25 25-13 30 13 50 15 30-30 30-35 25 5 17 25 6 95-20 50-33 30-10 20 8 60 0 28 14 0-14 30-15 32 16 60-12V160z"/>
                      </g>
                      <path d="M290 412l50-27 50-7 40 17 10 15-20 20-22 20-53 20-35 0-20-25z" fill="#aad3df"/>
                      <path d="M480 500l8 30-23 45-60 28h-70v-20l60-6 50-27 20-25z" fill="#add19e"/>
                      <g fill="none" stroke="#d8cfd8" stroke-width="2"><path d="M130 340l-16 30 30 70 50 0 60 30M170 260l50 50 0 60M200 420l20 40M300 530l60-10 60 20M340 520l0 60M320 540l50 40 50-30M370 500l20 80M290 560l90 0M420 410l10 60 50 30M450 200l100 60 90 10M620 220l0 80"/></g>
                      <path d="M48 362l100-24 60-20 60-5 110-60 18-30 30-22 60 20 40 60 0 60M380 250l20 60 30 60M398 222l10 60 40 60" fill="none" stroke="#bfa2c4" stroke-width="2"/>
                      <g fill="none" stroke="#eef0a8" stroke-width="5"><path d="M258 163l-10 50-20 30M65 245l50 12 90-5 25-10 20 40 22 20 0 70 30 12 30-6M485 385l25 30 50 25 40 50 20 50-4 50M1015 163l-6 25-34 40 8 60 25 40 50 20 14 30-6 15M1285 290l30 35 40 8"/></g>
                      <g fill="none" stroke="#f3a58d" stroke-width="6"><path d="M45 560l55-30 80-35 70-17 35-28-10-20 15-22 40-13 50-23 50 6 50-8 10-25h50l60 12 90-12 45-53v-22l-20-22-25-30-20-28"/><path d="M285 450l15 40-30 50-15 35-12 28M300 495l50-22 50-23 50-35 30-40"/></g>
                      <g fill="none" stroke="#8dc5df" stroke-width="3"><path d="M84 250l12 70M497 222l40 40 40 20 22 50M580 225l60 5 40-10M630 185l50-20M340 320l24 50M1268 268l20 30 40 10"/></g>
                      <g fill="none" stroke="#86a8e8" stroke-width="2.500" stroke-dasharray="7 6"><path d="M712 238l60-2 55 24 98 148 425-54M712 238l100-74M722 238l100-74M730 245l90 18 100 145 330 192M205 484l40 70M110 600l190-110M160 600l90-24M130 603l130-40"/></g>
                      <g class="places"><text x="207" y="236">Hitu Messing</text><text x="152" y="256">Wakal</text><text x="240" y="317">Tegalo Godok</text><text x="198" y="350">Hasal</text><text x="104" y="342" transform="rotate(-10 104 342)" fill="#9a78a8">Maluku Tengah</text><text x="333" y="372">Waiheru</text><text x="398" y="360">Negeri</text><text x="330" y="390">Hunut</text><text x="267" y="425">Poka</text><text x="178" y="438">Telaga Pange</text><text x="182" y="478">Wayame</text><text x="242" y="471">Rumah Tiga</text><text x="372" y="468">Halong</text><text x="286" y="496">Hative Kecil</text><text x="108" y="516">Souhuru</text><text x="65" y="537">Hative Besar</text><text x="234" y="531">Pandan Kasturi</text><text x="247" y="557">Batumerah</text><text x="552" y="594">Hutumuri</text><text x="538" y="443" transform="rotate(42 538 443)">Ambon</text><text x="600" y="249">Tulehu</text><text x="668" y="179">Waai</text><text x="704" y="263">Tulehu Kampung</text><text x="752" y="326">Tenga-tenga</text><text x="620" y="356">Suli</text><text x="714" y="385">Tial</text><text x="972" y="278">Sameth</text><text x="976" y="299">Haruku</text><text x="1026" y="381">Oma</text><text x="1216" y="348">Wassu</text><text x="1272" y="306">Aboru</text><text x="210" y="596" class="city">Ambon</text><text x="1192" y="205" class="isle">Pulau Haruku</text></g>
                      <g fill="#4343ff" fill-opacity=".25" stroke="#00f" stroke-width="3.500"><circle cx="227" cy="241" r="7"/><circle cx="712" cy="238" r="7"/><circle cx="613" cy="340" r="7"/><circle cx="538" cy="339" r="6"/><circle cx="542" cy="339" r="6"/><circle cx="546" cy="339" r="6"/><circle cx="476" cy="338" r="7"/><circle cx="491" cy="340" r="7"/><circle cx="475" cy="352" r="7"/><circle cx="373" cy="363" r="7"/><circle cx="381" cy="371" r="7"/><circle cx="313" cy="403" r="7"/><circle cx="409" cy="432" r="7"/><circle cx="415" cy="428" r="7"/><circle cx="434" cy="419" r="7"/><circle cx="339" cy="473" r="7"/><circle cx="205" cy="484" r="7"/><circle cx="308" cy="497" r="7"/><circle cx="304" cy="511" r="6"/><circle cx="300" cy="511" r="6"/><circle cx="95" cy="538" r="7"/><circle cx="303" cy="556" r="7"/><circle cx="355" cy="551" r="7"/><circle cx="366" cy="570" r="7"/><circle cx="255" cy="572" r="7"/><circle cx="241" cy="583" r="7"/><circle cx="253" cy="580" r="7"/><circle cx="266" cy="581" r="7"/><circle cx="273" cy="590" r="7"/><circle cx="243" cy="594" r="7"/><circle cx="252" cy="594" r="7"/></g>
                      <path d="M436 383q4-18 20-19q12 2 12 14q0 14-8 22l-8 10" fill="none" stroke="#00f" stroke-width="21" stroke-linecap="round"/><circle cx="454" cy="378" r="3" fill="#d8d8f8"/>
                    </svg>
                    <div class="zoom"><button aria-label="Perbesar">+</button><button aria-label="Perkecil">−</button></div>
                    <a class="credit" href="#"><i></i>Leaflet</a>
                  </div>
                </section>
              </div>
              <section class="card data">
                <form class="filters">
                  <label for="col"><svg><use href="#e-mag"/></svg>Filter by:</label>
                  <span class="pick"><select id="col"><option>— Pilih Kolom —</option></select><svg><use href="#i-down"/></svg></span>
                  <span class="pick off"><select disabled aria-label="Nilai"><option>— Pilih Nilai —</option></select><svg><use href="#i-down"/></svg></span>
                  <button type="button"><svg><use href="#e-reset"/></svg>Reset Filter</button>
                </form>
                <div class="search"><label for="q">Search:</label><input id="q" type="text"></div>
                <table>
                  <colgroup><col class="c-phone"><col class="c-wide"><col class="c-code"><col class="c-name"><col class="c-cat"><col class="c-wide"><col class="c-prod"><col class="c-time"></colgroup>
                  <thead><tr>
                    <th><div>PhoneNumber<svg><use href="#i-up"/></svg></div></th><th><div>Address<svg><use href="#i-sort"/></svg></div></th><th><div>KodeKabupaten<svg><use href="#i-sort"/></svg></div></th><th><div>NamaUsaha<svg><use href="#i-sort"/></svg></div></th><th><div>Kategori<svg><use href="#i-sort"/></svg></div></th><th><div>CeritaUsaha<svg><use href="#i-sort"/></svg></div></th><th><div>ProdukUtama<svg><use href="#i-sort"/></svg></div></th><th><div>Timestamp<svg><use href="#i-sort"/></svg></div></th></tr></thead>
                  <tbody>
                    <tr><td>*********0042</td><td>Mangga Dua, Ambon, Maluku, 97116,<br>Indonesia</td><td>8171 - Kota Ambon</td><td>Usaha Kos-Kosan Putri -<br>Batu Gantung Dalam</td><td>L - Real Estat</td><td>Usaha Kos-kosan ini terdiri dari 5<br>kamar dan menerima khusus<br>mahasiswa putri.</td><td>Usaha kos-kosan<br>yang menerima<br>khusus<br>mahasiswa putri</td><td>2025-07-<br>07T10:00:53.884Z</td></tr>
                    <tr><td>*********0132</td><td>Passo, Ambon, Maluku, 97231,<br>Indonesia</td><td>8171 - Kota Ambon</td><td>Manda Mart</td><td>G - Perdagangan<br>Besar &amp; Eceran;<br>Reparasi Mobil/Motor</td><td>Perdagangan oli bekas</td><td>Oli bekas</td><td>2025-07-<br>04T08:51:26.522Z</td></tr>
                    <tr><td>*********0221</td><td>Halong, Ambon, Maluku, 97233,<br>Indonesia</td><td>8171 - Kota Ambon</td><td>Toko Sembako Nus Guru</td><td>G - Perdagangan<br>Besar &amp; Eceran;<br>Reparasi Mobil/Motor</td><td>Menjual sembako</td><td>Sembako</td><td>2025-07-<br>04T09:52:28.574Z</td></tr>
                  </tbody>
                </table>
              </section>
            </div>
            <div class="scroll"><span></span></div>
          </div>
        </div>
      </section>
    </div>
  </main>
</div>
<div class="base-bar"></div>
</body>
</html>
```

FILE: styles.css
```css
* { box-sizing: border-box; }
body { margin: 0; background: #fff; color: #1d1d1d; font-family: "Open Sans", "Noto Sans", sans-serif; overflow-x: hidden; }
h1, h2, h3, h4, p, ul { margin: 0; padding: 0; }
ul { list-style: none; }
button { border: 0; padding: 0; background: none; font: inherit; color: inherit; }
svg { display: block; flex: none; }
.defs { position: absolute; width: 0; height: 0; }

/* slide furniture */
.loader { height: 1px; width: 240px; margin-left: 840px; background: #d9d9d9; }
.loader span { display: block; width: 48px; height: 1px; background: #0078d4; }
.slide { display: flex; }
.rail { flex: none; width: 78px; padding: 19px 0 0 18px; }
.rail-bar { width: 17px; height: 119px; border-radius: 9px; background: #f9923b; }
.base-bar { height: 17px; margin: 31px 0 21px 16px; border-radius: 9px 0 0 9px; background: #f9923b; }
.columns { flex: 1; display: grid; grid-template-columns: 762fr 706fr; column-gap: 69px; padding-right: 79px; align-items: start; }
.col-left { padding-top: 180px; }
.col-right { padding-top: 71px; }

.title { display: flex; align-items: center; color: #9c0000; font-family: "Century Gothic", "Lato", sans-serif; font-weight: 700; line-height: 32px; white-space: nowrap; }
.title-lg { gap: 13px; height: 41px; margin: 0 0 3px 103px; font-size: 39px; }
.title-lg svg { width: 41px; height: 41px; }
.title-admin, .title-dash { gap: 10px; height: 32px; font-size: 31px; }
.title-admin svg, .title-dash svg { width: 32px; height: 32px; }
.title-admin { margin: 0 0 11px 20px; }
.title-dash { margin: 71px 0 27px 36px; }

.frame { border: 6px solid #000; box-shadow: 4px 4px 7px rgba(0, 0, 0, .5); display: flex; flex-direction: column; overflow: hidden; background: #fff; }
.frame-chat { aspect-ratio: 762 / 541; }
.frame-admin { aspect-ratio: 672 / 397; margin: 0 30px 0 4px; }
.frame-dash { aspect-ratio: 706 / 382; }

/* chat */
.chat-head { flex: none; height: 34px; display: flex; align-items: center; padding: 0 13px 3px 5px; z-index: 1; background: #fff; box-shadow: 0 1px 1px rgba(0, 0, 0, .1); }
.avatar { width: 24px; height: 24px; }
.chat-name { flex: 1; margin-left: 9px; font-size: 9px; }
.icon-btn { margin-left: 17px; }
.icon-btn:last-child { margin-left: 22px; }
.chat { position: relative; flex: 1; min-height: 0; display: flex; flex-direction: column; align-items: stretch; gap: 7px; padding: 0 33px; background: #f4f1ea; font-size: 8px; line-height: 11px; overflow: hidden; }
.wall { position: absolute; inset: 0; width: 100%; height: 100%; }
.stub { flex: none; width: 167px; height: 3px; border-radius: 0 0 4px 4px; background: #fff; position: relative; }
.row { flex: none; position: relative; display: flex; align-items: center; gap: 4px; }
.row.out { justify-content: flex-end; }
.bubble { position: relative; background: #fff; border-radius: 4px; padding: 4px 4px 4px 5px; box-shadow: 0 1px 1px rgba(0, 0, 0, .1); white-space: nowrap; }
.out .bubble { background: #d9fdd3; }
.tail-l { border-top-left-radius: 0; }
.tail-r { border-top-right-radius: 0; }
.tail-l::before, .tail-r::before { content: ""; position: absolute; top: 0; width: 4px; height: 5px; background: inherit; }
.tail-l::before { left: -4px; clip-path: polygon(0 0, 100% 0, 100% 100%); }
.tail-r::before { right: -4px; clip-path: polygon(0 0, 100% 0, 0 100%); }
.short { display: flex; align-items: center; height: 20px; gap: 4px; padding-top: 2px; }
.short time { padding-top: 6px; }
.short .read { margin-top: 6px; margin-left: -1px; }
time { color: #6f7478; font-size: 6px; line-height: 8px; }
.bubble > time { flex: none; }
.lines ~ time { position: absolute; right: 4px; bottom: 2px; }
.read { width: 10px; height: 7px; }
.lines { display: grid; grid-auto-rows: 1fr; align-items: center; }
.four { height: 46px; }
.sixteen { height: 182px; }
.three { height: 34px; }
.five { height: 54px; }
.ln { display: flex; align-items: center; gap: 3px; }
.em { width: 11px; height: 11px; }
ul.lines { margin: 2px 0 0 7px; }
ul.lines li { display: flex; align-items: center; gap: 3px; }
ul.lines li::before { content: ""; width: 2px; height: 2px; border-radius: 1px; background: #333; }
.round { width: 15px; height: 15px; border-radius: 50%; background: #fff; display: grid; place-items: center; }
.round svg { width: 11px; height: 11px; }
.map-bubble { width: 164px; height: 93px; padding: 1px; }
.loc-map { width: 162px; height: 91px; border-radius: 3px; }
.street { font-size: 20px; fill: #3c4a5c; font-weight: 600; }
.map-meta { position: absolute; right: 5px; bottom: 3px; display: flex; align-items: center; gap: 2px; }
.map-meta time { color: #fff; }
.to-end { position: absolute; right: 0; bottom: 9px; width: 26px; height: 26px; border-radius: 50%; background: #fff; box-shadow: 0 1px 2px rgba(0, 0, 0, .2); display: grid; place-items: center; color: #444; }
.to-end svg { width: 10px; height: 7px; }

.chat-sm { padding: 4px 25px 0 16px; font-size: 7px; line-height: 10px; }
.chat-sm .em { width: 11px; height: 11px; }
.chat-sm .ln { gap: 2px; }
.chat-sm .short { height: 18px; gap: 3px; }
.day { position: relative; flex: none; align-self: center; width: 40px; height: 12px; border-radius: 3px; background: #fff; color: #5c6165; font-size: 6px; line-height: 12px; text-align: center; }
.entry { padding: 4px 5px 3px; }
.next { margin-top: -6px; }
.more { position: absolute; right: 5px; top: 6px; width: 7px; height: 5px; color: #666; }

/* browser */
.frame-dash { font-family: "Inter", sans-serif; font-size: 6px; line-height: 9px; }
.tabs { flex: none; display: flex; align-items: center; height: 12px; padding: 0 4px; background: #cdcdcd; }
.tabs svg { width: 6px; height: 6px; }
.tabs .win { width: 40px; margin-left: auto; }
.tabs .plus { margin-left: 3px; }
.tab { display: flex; align-items: center; gap: 3px; width: 87px; height: 12px; margin-left: 5px; padding: 0 3px; background: #f7f7f7; border-radius: 2px 2px 0 0; font-family: "Open Sans", sans-serif; font-size: 5px; }
.tab span { flex: 1; }
.toolbar { flex: none; display: flex; align-items: center; gap: 4px; height: 15px; padding: 0 4px 0 3px; background: #f7f7f7; border-bottom: 1px solid #ececec; }
.nav { width: 24px; height: 8px; }
.tools { width: 50px; height: 8px; }
.address { flex: 1; display: flex; align-items: center; gap: 4px; height: 11px; padding: 0 4px 0 3px; border-radius: 6px; background: #fff; border: 1px solid #eee; }
.address svg { width: 6px; height: 6px; }
.address input { flex: 1; min-width: 0; height: 9px; border: 0; padding: 0; background: none; font: 5px "Open Sans", sans-serif; color: #333; }
.viewport { flex: 1; min-height: 0; display: flex; background: #f9f9f9; overflow: hidden; }
.page { flex: 1; min-width: 0; padding: 6px 6px 0 7px; }
.scroll { flex: none; width: 7px; padding-top: 8px; }
.scroll span { display: block; width: 3px; height: 192px; margin-left: 1px; border-radius: 2px; background: #8a8a8a; }
.card { background: #fff; border-radius: 3px; box-shadow: 0 0 3px rgba(0, 0, 0, .08); }
.top-cards { display: grid; grid-template-columns: 222fr 446fr; gap: 6px; height: 172px; }
.summary { padding: 6px; }
.summary h3 { display: flex; align-items: center; gap: 3px; font-size: 8px; line-height: 11px; }
.summary h3 svg { width: 9px; height: 9px; }
.total { margin-top: 6px; color: #ef8e1d; font-size: 24px; font-weight: 700; line-height: 34px; text-align: center; }
.total-label { margin-top: 2px; color: #777; text-align: center; }
.summary h4 { margin-top: 5px; font-size: 7px; line-height: 11px; }
.total-label + h4 { margin-top: 6px; }
.summary li { display: flex; align-items: center; line-height: 11px; color: #333; }
.summary li::before { content: ""; width: 2px; height: 2px; margin-right: 3px; border-radius: 1px; background: #333; }
.summary h4 + ul { margin-top: 1px; }
.summary ul + h4 { margin-top: 1px; }
.map-card { padding: 4px 5px; }
.map { position: relative; height: 147px; border: 1px solid #666; border-radius: 3px; overflow: hidden; }
.map > svg { width: 100%; height: 100%; }
.places { font-family: "Noto Sans", sans-serif; font-size: 13px; fill: #444; }
.places .city { font-size: 15px; }
.places .isle { font-size: 16px; font-style: italic; font-weight: 600; }
.zoom { position: absolute; left: 4px; top: 4px; width: 12px; display: grid; background: #fff; border: 1px solid #ccc; border-radius: 1px; }
.zoom button { height: 10px; font-size: 7px; font-weight: 700; line-height: 9px; }
.zoom button + button { border-top: 1px solid #ccc; }
.credit { position: absolute; right: 0; bottom: 0; display: flex; align-items: center; gap: 1px; padding: 0 2px; background: #e9f2f5; color: #0078a8; font-size: 5px; line-height: 6px; text-decoration: none; }
.credit i { width: 4px; height: 3px; background: linear-gradient(#4c7be1 50%, #ffd500 50%); }
.data { margin-top: 6px; padding: 5px 5px 0; height: 200px; }
.filters { display: grid; grid-template-columns: 34px 209fr 206fr 200fr; column-gap: 4px; align-items: center; }
.filters label { display: flex; align-items: center; gap: 3px; white-space: nowrap; }
.filters label svg { width: 6px; height: 6px; }
.pick { position: relative; }
.pick select { appearance: none; display: block; width: 100%; height: 13px; padding: 0 5px; border: 1px solid #999; border-radius: 1px; background: #fff; font: inherit; color: #222; }
.pick svg { position: absolute; right: 2px; top: 5px; width: 4px; height: 3px; }
.pick.off { margin-right: 3px; }
.pick.off select { border-color: #eee; background: #fafafa; color: #aaa; opacity: 1; }
.filters > button { display: flex; align-items: center; justify-content: center; gap: 2px; height: 13px; border: 1px solid #bbb; border-radius: 1px; background: #ececec; }
.filters > button svg { width: 6px; height: 6px; }
.search { display: flex; justify-content: flex-end; align-items: center; gap: 1px; margin-top: 5px; }
.search input { width: 66px; height: 10px; padding: 0 2px; border: 1px solid #ccc; font: inherit; }
table { width: 100%; table-layout: fixed; border-collapse: collapse; color: #333; }
.c-phone { width: 11%; }
.c-wide { width: 18%; }
.c-code { width: 11%; }
.c-name { width: 13%; }
.c-cat { width: 10%; }
.c-prod { width: 9%; }
.c-time { width: 10%; }
th { height: 15px; padding: 0 4px 0 5px; background: #efb052; text-align: left; color: #3a2c14; }
th div { display: flex; align-items: center; justify-content: space-between; }
th svg { width: 3px; height: 6px; }
td { height: 32px; padding: 0 0 0 5px; white-space: nowrap; border-bottom: 1px solid #eee; }
tbody tr:first-child td { height: 41px; }
tbody tr:nth-child(odd) { background: #f9f9f9; }
tbody tr:nth-child(odd) td:first-child { background: #f0f0f0; }
tbody tr:nth-child(even) td:first-child { background: #fafcff; }
```
